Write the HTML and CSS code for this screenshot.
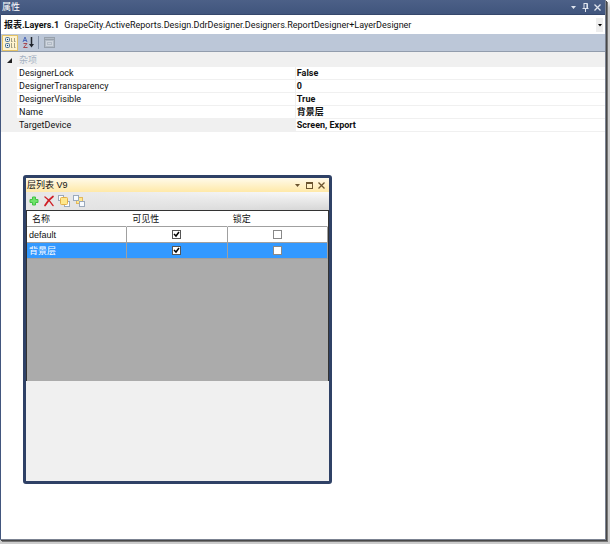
FILE: index.html
```html
<!DOCTYPE html>
<html lang="zh-CN">
<head>
    <meta charset="UTF-8">
    <meta name="viewport" content="width=device-width, initial-scale=1.0">
    <title>属性</title>
    <link rel="stylesheet" href="styles.css">
</head>
<body>
    <main class="panel">
        <header class="panel-title">
            <span>属性</span>
            <div class="title-buttons">
                <button type="button" aria-label="窗口位置">
                    <svg width="9" height="9" viewBox="0 0 9 9"><path d="M2 3h5L4.500 6z" fill="#dfe4ee"/></svg>
                </button>
                <button type="button" aria-label="自动隐藏">
                    <svg width="9" height="9" viewBox="0 0 9 9" fill="none" stroke="#dfe4ee"><path d="M3 .5h3.500V5M3 0v5M1.500 5.500h6M4.500 6v3"/><path d="M5.500 1v4" opacity=".6"/></svg>
                </button>
                <button type="button" aria-label="关闭">
                    <svg width="9" height="9" viewBox="0 0 9 9" stroke="#dfe4ee" stroke-width="1.300"><path d="M1.500 1.500l6 6M7.500 1.500l-6 6"/></svg>
                </button>
            </div>
        </header>

        <div class="object-bar">
            <label for="object-select">报表.Layers.1</label>
            <select id="object-select">
                <option>GrapeCity.ActiveReports.Design.DdrDesigner.Designers.ReportDesigner+LayerDesigner</option>
            </select>
        </div>

        <div class="panel-tools">
            <button type="button" class="tool active" aria-label="按分类顺序">
                <svg width="13" height="13" viewBox="0 0 13 13">
                    <rect x="1.500" y="1.500" width="4" height="4" rx="1" fill="#dbe8f2" stroke="#51789b"/>
                    <rect x="1.500" y="7.500" width="4" height="4" rx="1" fill="#dbe8f2" stroke="#51789b"/>
                    <path d="M3 3.500h1M3 9.500h1" stroke="#1d3850"/>
                    <path d="M7.500 2v3M7.500 7v4M10.500 2v3M10.500 7v4M7 5.500h1.500M10 5.500h1.500M7 11.500h1.500M10 11.500h1.500" stroke="#a39f82"/>
                </svg>
            </button>
            <button type="button" class="tool" aria-label="按字母顺序">
                <svg width="13" height="13" viewBox="0 0 13 13" fill="none">
                    <path d="M1 6l2-5 2 5M2 4.500h2.500" stroke="#4b68b8"/>
                    <path d="M1.500 7.500h3.500l-3.500 4h4" stroke="#a8474f"/>
                    <path d="M9.500 1v8" stroke="#20242c" stroke-width="1.500"/>
                    <path d="M7 8h5l-2.500 3.500z" fill="#20242c"/>
                </svg>
            </button>
            <span class="tool-line"></span>
            <button type="button" class="tool" aria-label="属性页" disabled>
                <svg width="13" height="13" viewBox="0 0 13 13" fill="none" stroke="#98a1ac">
                    <rect x="1.500" y="1.500" width="10" height="10" fill="#b3bcc7"/>
                    <path d="M2 3.500h9"/><rect x="3.500" y="5.500" width="6" height="4" stroke="#d0d6de"/><path d="M5 7.500h3" stroke="#d0d6de"/>
                </svg>
            </button>
        </div>

        <table class="props">
            <colgroup>
                <col class="col-gutter">
                <col class="col-name">
                <col>
            </colgroup>
            <thead>
                <tr>
                    <th class="gutter"><svg width="7" height="7" viewBox="0 0 7 7"><path d="M6 1v5H1z" fill="#222"/></svg></th>
                    <th colspan="2">杂项</th>
                </tr>
            </thead>
            <tbody>
                <tr><td class="gutter"></td><td class="name">DesignerLock</td><td class="value">False</td></tr>
                <tr><td class="gutter"></td><td class="name">DesignerTransparency</td><td class="value">0</td></tr>
                <tr><td class="gutter"></td><td class="name">DesignerVisible</td><td class="value">True</td></tr>
                <tr><td class="gutter"></td><td class="name">Name</td><td class="value">背景层</td></tr>
                <tr class="current"><td class="gutter"></td><td class="name">TargetDevice</td><td class="value">Screen, Export</td></tr>
            </tbody>
        </table>
    </main>

    <section class="layer-window">
        <header class="layer-title">
            <span>层列表 V9</span>
            <div class="title-buttons">
                <button type="button" aria-label="窗口位置">
                    <svg width="9" height="9" viewBox="0 0 9 9"><path d="M2 3h5L4.500 6z" fill="#6b5530"/></svg>
                </button>
                <button type="button" aria-label="最大化">
                    <svg width="9" height="9" viewBox="0 0 9 9" fill="none" stroke="#6b5530"><rect x="1.500" y="1.500" width="6" height="6"/><path d="M1 2h7" stroke-width="2"/></svg>
                </button>
                <button type="button" aria-label="关闭">
                    <svg width="9" height="9" viewBox="0 0 9 9" stroke="#6b5530" stroke-width="1.300"><path d="M1.500 1.500l6 6M7.500 1.500l-6 6"/></svg>
                </button>
            </div>
        </header>
        <div class="layer-tools">
            <button type="button" class="tool" aria-label="添加层">
                <svg width="12" height="12" viewBox="0 0 12 12"><path d="M4.500 2h3v2.500H10v3H7.500V10h-3V7.500H2v-3h2.500z" fill="#6fe36a" stroke="#43c246"/></svg>
            </button>
            <button type="button" class="tool" aria-label="删除层">
                <svg width="12" height="12" viewBox="0 0 12 12" fill="none" stroke="#cf1f26" stroke-linecap="round"><path d="M2 2c3 2 6 5 8 8.500" stroke-width="1.500"/><path d="M10 1.500C6.500 4 4 7 2 10.500" stroke-width="1.700"/></svg>
            </button>
            <button type="button" class="tool" aria-label="置于顶层">
                <svg width="12" height="12" viewBox="0 0 12 12"><rect x=".5" y=".5" width="5" height="5" fill="#fff" stroke="#9ba9bb"/><rect x="6.500" y="6.500" width="5" height="5" fill="#fff" stroke="#9ba9bb"/><rect x="2.500" y="2.500" width="7" height="7" rx="1" fill="#ffe88c" stroke="#e2b04a"/></svg>
            </button>
            <button type="button" class="tool" aria-label="置于底层">
                <svg width="12" height="12" viewBox="0 0 12 12"><rect x="3.500" y="2.500" width="6" height="6" fill="#ffe88c" stroke="#e2b860"/><rect x=".5" y=".5" width="5" height="5" fill="#f7fbff" stroke="#9ba9bb"/><rect x="6.500" y="6.500" width="5" height="5" fill="#f7fbff" stroke="#9ba9bb"/></svg>
            </button>
        </div>
        <div class="layer-grid">
            <table class="layers">
                <thead>
                    <tr><th>名称</th><th>可见性</th><th>锁定</th></tr>
                </thead>
                <tbody>
                    <tr>
                        <td>default</td>
                        <td class="check"><input type="checkbox" aria-label="default 可见性" checked></td>
                        <td class="check"><input type="checkbox" aria-label="default 锁定"></td>
                    </tr>
                    <tr class="selected">
                        <td>背景层</td>
                        <td class="check"><input type="checkbox" aria-label="背景层 可见性" checked></td>
                        <td class="check"><input type="checkbox" aria-label="背景层 锁定"></td>
                    </tr>
                </tbody>
            </table>
        </div>
    </section>
</body>
</html>
```

FILE: styles.css
```css
* {
    box-sizing: border-box;
}

body {
    margin: 0;
    height: 100vh;
    padding: 0 4px 4px 0;
    background: linear-gradient(#fff, #ccc 8px);
    font-family: Roboto, "Noto Sans CJK SC", sans-serif;
    font-size: 9px;
    line-height: 12px;
    color: #111;
}

button {
    display: flex;
    align-items: center;
    justify-content: center;
    padding: 0;
    border: 0;
    background: none;
}

svg {
    display: block;
}

table {
    width: 100%;
    border-collapse: separate;
    border-spacing: 0;
    table-layout: fixed;
}

th,
td {
    padding: 0;
    text-align: left;
    white-space: nowrap;
}

/* 属性面板 */
.panel {
    height: 100%;
    background-color: #fff;
    border: 1px solid #7b8291;
    border-width: 0 1px 1px;
    border-left-color: #42567e;
    box-shadow: 1px 1px 0 #484848, 2px 2px 0 #777;
}

.panel-title {
    display: flex;
    align-items: center;
    justify-content: space-between;
    height: 15px;
    padding: 0 3px 0 1px;
    background: linear-gradient(#4c6087, #40557d);
    border-bottom: 1px solid #35476c;
    color: #fff;
}

.title-buttons {
    display: flex;
    gap: 3px;
}

.object-bar {
    display: flex;
    align-items: center;
    height: 19px;
    padding: 0 2px 0 3px;
    gap: 5px;
}

.object-bar label {
    font-weight: bold;
}

.object-bar select {
    flex: 1;
    min-width: 0;
    height: 15px;
    padding: 0;
    border: 0;
    appearance: none;
    font: inherit;
    color: inherit;
    background: #fff url("data:image/svg+xml,%3Csvg xmlns='http://www.w3.org/2000/svg' width='7' height='14'%3E%3Crect width='7' height='14' fill='%23eee'/%3E%3Cpath d='M2 6h4L4 8.500z'/%3E%3C/svg%3E") no-repeat right center;
}

.panel-tools {
    display: flex;
    align-items: center;
    height: 18px;
    padding-left: 1px;
    gap: 2px;
    background-color: #bcc7d8;
    border-bottom: 1px solid #929dad;
}

.panel-tools .tool {
    width: 16px;
    height: 16px;
}

.panel-tools .active {
    background-color: #fff3cf;
    border: 1px solid #e5c365;
}

.tool-line {
    width: 1px;
    height: 13px;
    background-color: #8795ab;
}

.props {
    border-top: 2px solid #f0f0f0;
}

.col-gutter {
    width: 16px;
}

.col-name {
    width: 46%;
}

.props th,
.props td {
    height: 13px;
    border-bottom: 1px solid #f0f0f0;
}

.props th {
    background-color: #f0f0f0;
    color: #a5b0c2;
    font-weight: normal;
}

.props th:last-child,
.props .name {
    padding-left: 2px;
}

.props .gutter {
    padding-left: 5px;
    background-color: #f0f0f0;
}

.props .value {
    padding-left: 1px;
    border-left: 1px solid #f0f0f0;
    font-weight: bold;
}

.props .current .name {
    background-color: #f0f0f0;
}

/* 层列表浮动窗口 */
.layer-window {
    position: absolute;
    left: 23px;
    top: 175px;
    width: 309px;
    height: 309px;
    display: flex;
    flex-direction: column;
    background-color: #f0f0f0;
    border: 3px solid #2f4166;
    border-radius: 3px;
    font-family: "Liberation Sans", "Noto Sans CJK SC", sans-serif;
}

.layer-title {
    display: flex;
    align-items: center;
    justify-content: space-between;
    height: 14px;
    padding: 0 3px 0 1px;
    background: linear-gradient(#fffaea, #ffe9a8);
}

.layer-tools {
    display: flex;
    align-items: center;
    height: 18px;
    padding-left: 2px;
    gap: 3px;
    background: linear-gradient(90deg, #e6e6e6, transparent), linear-gradient(#fafafa, #d6d6d6);
}

.layer-grid {
    height: 171px;
    background-color: #ababab;
    border: 1px solid #333;
    border-width: 1px 1px 0;
}

.layers th,
.layers td {
    height: 16px;
    padding-left: 2px;
    background-color: #fff;
    border-right: 1px solid #a0a0a0;
    border-bottom: 1px solid #a0a0a0;
}

.layers th {
    padding-left: 5px;
    border-right-color: #fff;
    font-weight: normal;
}

.layers .check {
    padding: 0;
    text-align: center;
}

.layers .selected td {
    background-color: #3399ff;
    color: #fff;
}

.layers input {
    display: block;
    width: 9px;
    height: 9px;
    margin: 0 auto;
    appearance: none;
    background: #fff center no-repeat;
    border: 1px solid #888;
}

.layers input:checked {
    border-color: #555;
    background-image: url("data:image/svg+xml,%3Csvg xmlns='http://www.w3.org/2000/svg' width='7' height='7'%3E%3Cpath d='M1 3l2 2 3-4' fill='none' stroke='%23000' stroke-width='1.500'/%3E%3C/svg%3E");
}
```
